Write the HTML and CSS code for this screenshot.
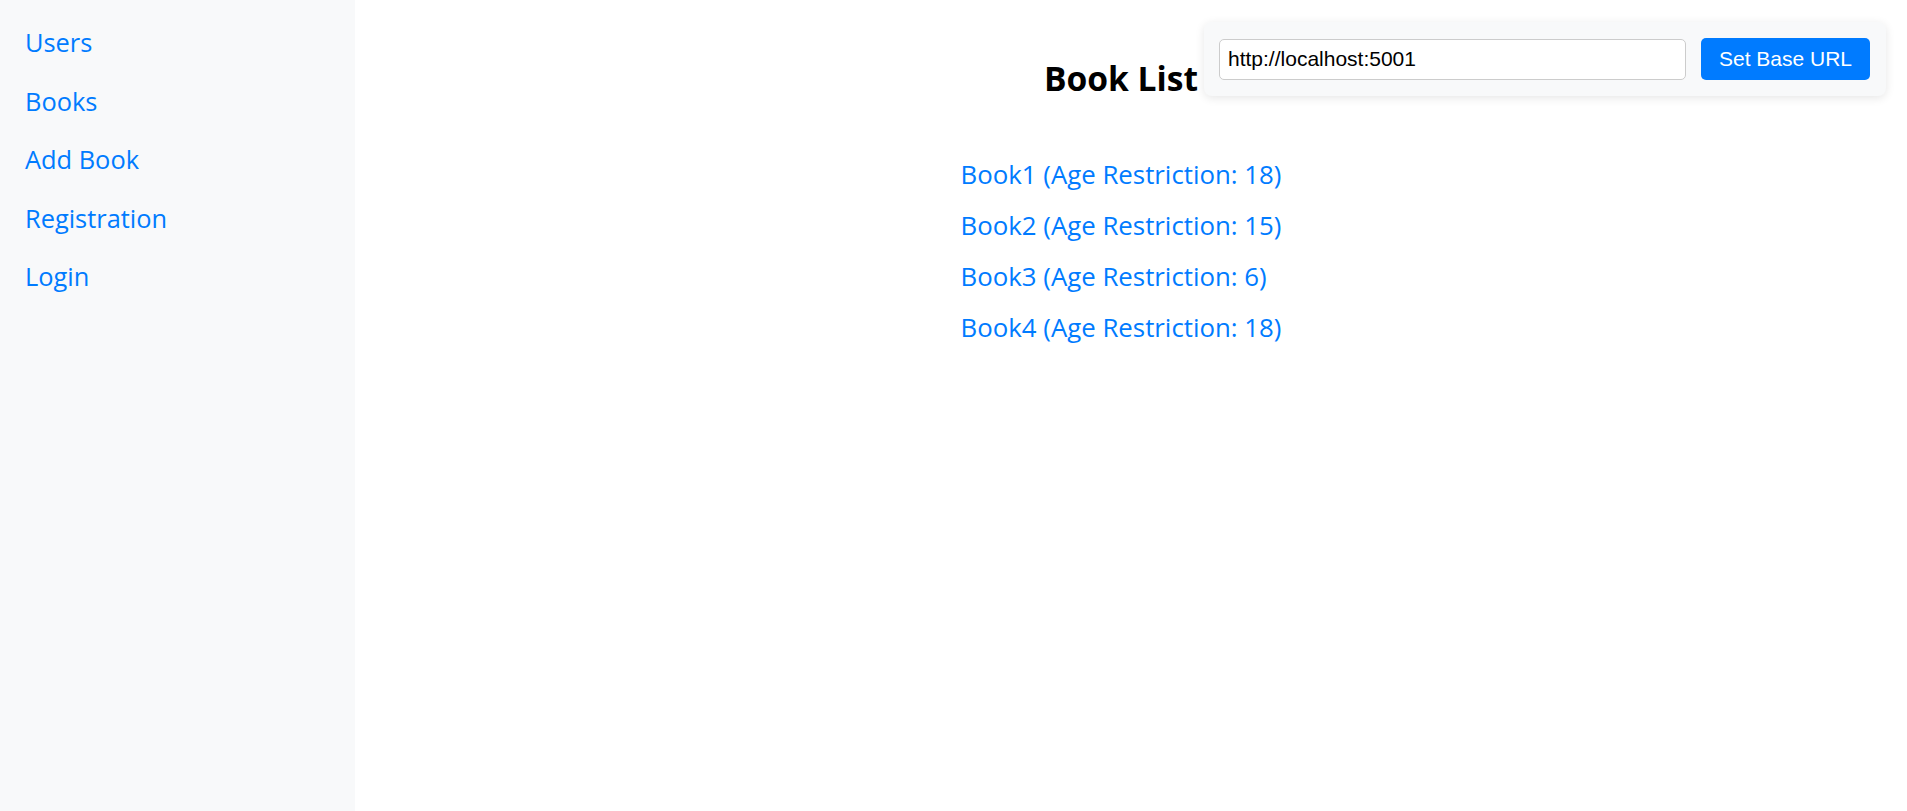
FILE: index.html
```html
<!DOCTYPE html>
<html lang="en">
<head>
<meta charset="utf-8">
<title>Book List</title>
<link rel="stylesheet" href="styles.css">
</head>
<body>
<div class="app">
  <nav class="sidebar">
    <a href="#" class="nav-link">Users</a>
    <a href="#" class="nav-link">Books</a>
    <a href="#" class="nav-link">Add Book</a>
    <a href="#" class="nav-link">Registration</a>
    <a href="#" class="nav-link">Login</a>
  </nav>
  <main class="main">
    <h2 class="title">Book List</h2>
    <div class="books">
      <a href="#" class="book">Book1 (Age Restriction: 18)</a>
      <a href="#" class="book">Book2 (Age Restriction: 15)</a>
      <a href="#" class="book">Book3 (Age Restriction: 6)</a>
      <a href="#" class="book">Book4 (Age Restriction: 18)</a>
    </div>
  </main>
</div>
<div class="url-panel">
  <input class="url-input" type="text" value="http://localhost:5001">
  <button class="url-button">Set Base URL</button>
</div>
</body>
</html>
```

FILE: styles.css
```css
html, body {
  margin: 0;
  padding: 0;
  height: 100%;
}
body {
  font-family: "Open Sans", "Noto Sans", sans-serif;
  background: #ffffff;
  color: #000;
}
.app {
  display: flex;
  min-height: 100vh;
}
.sidebar {
  width: 355px;
  flex-shrink: 0;
  background: #f8f9fa;
  padding: 25px 0 0 25px;
  box-sizing: border-box;
  display: flex;
  flex-direction: column;
  gap: 24.5px;
}
.nav-link {
  color: #007bff;
  text-decoration: none;
  font-size: 25.4px;
  line-height: 34px;
}
.main {
  flex: 1;
  padding: 56px 40px 20px 20px;
  box-sizing: border-box;
}
.title {
  margin: 0 0 56px;
  text-align: center;
  font-size: 33.6px;
  font-weight: 700;
  line-height: 45px;
}
.books {
  width: fit-content;
  margin: 0 auto;
  display: flex;
  flex-direction: column;
  gap: 17px;
}
.book {
  color: #007bff;
  text-decoration: none;
  font-size: 25.8px;
  line-height: 34px;
}
.url-panel {
  position: fixed;
  top: 22px;
  right: 21px;
  display: flex;
  align-items: center;
  gap: 15px;
  padding: 16px 16px 16px 15px;
  background: #f8f9fa;
  border-radius: 8px;
  box-shadow: 0 2px 10px rgba(0, 0, 0, 0.1);
}
.url-input {
  width: 467px;
  height: 41px;
  box-sizing: border-box;
  border: 1px solid #ccc;
  border-radius: 5px;
  padding: 0 8px;
  font-family: "Liberation Sans", Arial, sans-serif;
  font-size: 21px;
  color: #000;
  background: #fff;
}
.url-button {
  width: 169px;
  height: 42px;
  border: none;
  border-radius: 5px;
  background: #007bff;
  color: #fff;
  font-family: "Liberation Sans", Arial, sans-serif;
  font-size: 21px;
  cursor: pointer;
}
```
